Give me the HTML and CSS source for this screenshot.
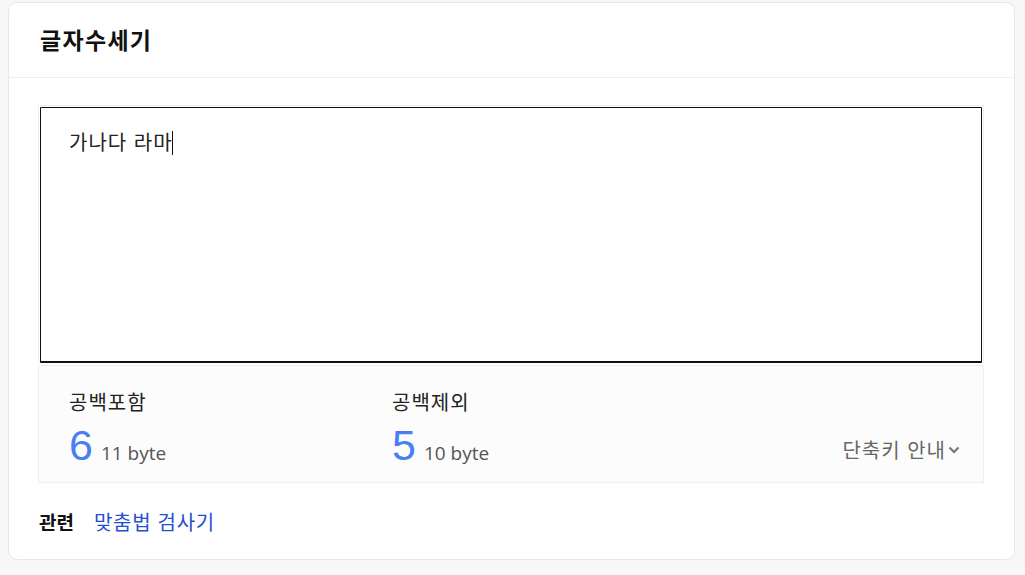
FILE: index.html
```html
<!DOCTYPE html>
<html lang="ko">
<head>
  <meta charset="UTF-8" />
  <meta name="viewport" content="width=device-width, initial-scale=1" />
  <title>글자수세기</title>
  <link rel="stylesheet" href="styles.css">
</head>
<body>
  <div class="card">
    <header class="card-head">글자수세기</header>
    <main class="card-body">
      <div class="editor">
        <div class="input-box">가나다 라마<span class="caret"></span></div>
      </div>
      <div class="stats">
        <div class="stat">
          <div class="stat-label">공백포함</div>
          <div class="stat-value"><span class="num">6</span><span class="bytes">11 byte</span></div>
        </div>
        <div class="stat">
          <div class="stat-label">공백제외</div>
          <div class="stat-value"><span class="num">5</span><span class="bytes">10 byte</span></div>
        </div>
        <button class="shortcut">단축키 안내<svg width="12" height="9" viewBox="0 0 12 9"><path d="M1.5 2.5 L6 7 L10.5 2.5" fill="none" stroke="#777" stroke-width="2.2"/></svg></button>
      </div>
      <div class="related">
        <strong>관련</strong>
        <a href="#">맞춤법 검사기</a>
      </div>
    </main>
  </div>
</body>
</html>
```

FILE: styles.css
```css
* { box-sizing: border-box; }
body { margin: 0; padding: 2px 10px 0 8px; background: #f6f7f9; font-family: "Noto Sans CJK KR", "Liberation Sans", sans-serif; color: #222; }
.card { background: #fff; border: 1px solid #e6e8eb; border-radius: 9px; height: 558px; }
.card-head { height: 75px; border-bottom: 1px solid #eceef0; padding: 0 0 2px 31px; display: flex; align-items: center; font-size: 23px; letter-spacing: 1.3px; font-weight: bold; color: #111; }
.card-body { padding: 27px 30px 0 29px; }
.editor { border: 1px solid #eee; border-bottom: none; padding: 1px 1px 0 1px; }
.input-box { height: 256px; border: 1px solid #111; border-bottom-width: 2px; border-radius: 1px; padding: 21px 28px; font-size: 20px; letter-spacing: 1px; color: #222; line-height: 26px; }
.caret { display: inline-block; width: 1px; height: 24px; background: #111; vertical-align: -5px; margin-left: -1px; }
.stats { display: flex; align-items: flex-end; background: #fcfcfc; border: 1px solid #eee; margin-top: 2px; height: 118px; padding: 22px 23px 9px 30px; }
.stat { width: 323px; align-self: stretch; display: flex; flex-direction: column; justify-content: space-between; }
.stat-label { font-size: 20px; letter-spacing: 1px; line-height: 28px; color: #222; }
.stat-value { display: flex; align-items: baseline; gap: 8px; line-height: 40px; }
.num { font-family: "Liberation Sans", sans-serif; font-size: 43px; color: #4a7ff2; }
.bytes { font-family: "Open Sans", sans-serif; font-size: 19px; color: #555; }
.shortcut { margin-left: auto; margin-bottom: 9px; border: none; background: none; padding: 0; font-family: inherit; font-size: 20px; letter-spacing: 1px; color: #666; display: flex; align-items: center; gap: 2px; cursor: pointer; }
.related { display: flex; align-items: center; gap: 20px; padding-top: 24px; font-size: 19px; }
.related strong { color: #111; margin-left: 1px; }
.related a { color: #1f4fce; text-decoration: none; font-size: 20px; letter-spacing: 0.7px; }
```
